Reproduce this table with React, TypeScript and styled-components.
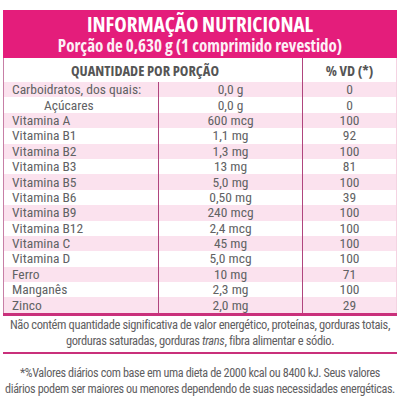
import React from "react";
import styled, { createGlobalStyle } from "styled-components";

const GlobalStyle = createGlobalStyle`
  html, body {
    margin: 0;
    padding: 0;
    background: #fff;
  }
`;

const Panel = styled.div`
  width: 394px;
  margin: 10px 0 0 3px;
  color: #616264;
  font-family: "Roboto Condensed", "Open Sans", sans-serif;
`;

const Header = styled.div`
  height: 48px;
  background: #e41d7b;
  color: #fff;
  display: flex;
  flex-direction: column;
  align-items: center;
  justify-content: center;
  gap: 2px;
  font-family: "Open Sans", sans-serif;
  font-stretch: 75%;
`;

const Title = styled.h1`
  margin: 0;
  font-size: 21px;
  line-height: 21px;
  font-weight: 700;
`;

const Subtitle = styled.div`
  font-size: 17px;
  line-height: 18px;
  font-weight: 700;
  color: #fdf0f6;
`;

const Table = styled.table`
  width: 100%;
  border-collapse: collapse;
  table-layout: fixed;
  border-left: 1px solid #c77fa6;
  border-right: 1px solid #f4d3e2;
  border-bottom: 3px solid #c9307b;
`;

const HeadCell = styled.th<{ $pad?: number; $divider?: boolean }>`
  height: 24px;
  padding: 0 ${(p) => p.$pad ?? 0}px 0 0;
  font-family: "Open Sans", sans-serif;
  font-stretch: 75%;
  font-size: 14.5px;
  font-weight: 700;
  text-align: center;
  color: #555;
  border-left: ${(p) => (p.$divider ? "1.5px solid #b0457e" : "none")};
`;

const Row = styled.tr<{ $alt: boolean }>`
  background: ${(p) => (p.$alt ? "#fbe2ee" : "#fff")};
`;

const Cell = styled.td<{ $align?: string; $indent?: number; $divider?: boolean }>`
  height: 15.4px;
  padding: 0 0 0 ${(p) => p.$indent ?? 0}px;
  font-size: 13.5px;
  line-height: 15px;
  font-weight: 400;
  text-align: ${(p) => p.$align ?? "center"};
  border-left: ${(p) => (p.$divider ? "1.5px solid #b0457e" : "none")};
  white-space: nowrap;
`;

const Note = styled.p<{ $line?: boolean }>`
  margin: 0;
  padding: ${(p) => (p.$line ? "1px 0 2px" : "11px 0 0")};
  font-size: ${(p) => (p.$line ? 12.5 : 12.2)}px;
  letter-spacing: -0.38px;
  line-height: 16.5px;
  text-align: center;
  color: #5f6062;
  white-space: nowrap;
  border-bottom: ${(p) => (p.$line ? "2.5px solid #c9307b" : "none")};
`;

const rows: [string, string, string, number?][] = [
  ["Carboidratos, dos quais:", "0,0 g", "0"],
  ["Açúcares", "0,0 g", "0", 40],
  ["Vitamina A", "600 mcg", "100"],
  ["Vitamina B1", "1,1 mg", "92"],
  ["Vitamina B2", "1,3 mg", "100"],
  ["Vitamina B3", "13 mg", "81"],
  ["Vitamina B5", "5,0 mg", "100"],
  ["Vitamina B6", "0,50 mg", "39"],
  ["Vitamina B9", "240 mcg", "100"],
  ["Vitamina B12", "2,4 mcg", "100"],
  ["Vitamina C", "45 mg", "100"],
  ["Vitamina D", "5,0 mcg", "100"],
  ["Ferro", "10 mg", "71"],
  ["Manganês", "2,3 mg", "100"],
  ["Zinco", "2,0 mg", "29"],
];

const App: React.FC = () => {
  return (
    <>
      <GlobalStyle />
      <Panel>
        <Header>
          <Title>INFORMAÇÃO NUTRICIONAL</Title>
          <Subtitle>Porção de 0,630 g (1 comprimido revestido)</Subtitle>
        </Header>
        <Table>
          <colgroup>
            <col style={{ width: 155 }} />
            <col style={{ width: 144 }} />
            <col />
          </colgroup>
          <thead>
            <tr>
              <HeadCell colSpan={2} $pad={16}>
                QUANTIDADE POR PORÇÃO
              </HeadCell>
              <HeadCell $divider>% VD (*)</HeadCell>
            </tr>
          </thead>
          <tbody>
            {rows.map(([name, amount, vd, indent], i) => (
              <Row key={name} $alt={i % 2 === 0}>
                <Cell $align="left" $indent={indent ?? 8}>
                  {name}
                </Cell>
                <Cell $divider>{amount}</Cell>
                <Cell $divider>{vd}</Cell>
              </Row>
            ))}
          </tbody>
        </Table>
        <Note $line>
          Não contém quantidade significativa de valor energético, proteínas, gorduras totais,
          <br />
          gorduras saturadas, gorduras <i>trans</i>, fibra alimentar e sódio.
        </Note>
        <Note>
          *%Valores diários com base em uma dieta de 2000 kcal ou 8400 kJ. Seus valores
          <br />
          diários podem ser maiores ou menores dependendo de suas necessidades energéticas.
        </Note>
      </Panel>
    </>
  );
};

export default App;
